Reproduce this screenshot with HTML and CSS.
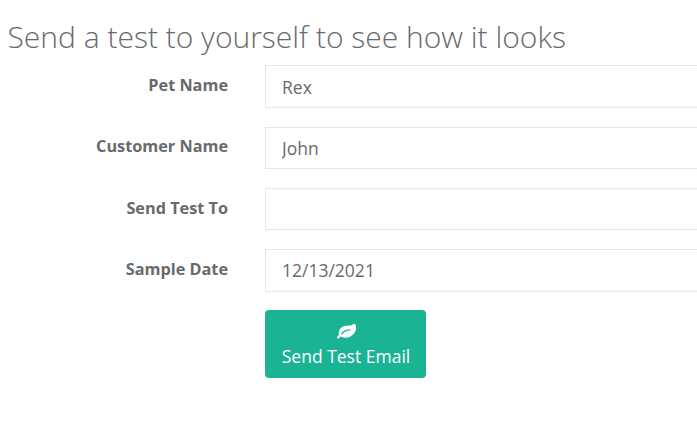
FILE: index.html
```html
<!DOCTYPE html>
<html lang="en">
<head>
  <meta charset="UTF-8">
  <meta name="viewport" content="width=device-width, initial-scale=1.0">
  <title>Send Test Email</title>
  <link rel="stylesheet" href="styles.css">
</head>
<body>
  <h2>Send a test to yourself to see how it looks</h2>

  <form id="testForm">
    <div class="form-group">
      <label for="petName">Pet Name</label>
      <input type="text" id="petName" value="Rex">
    </div>

    <div class="form-group">
      <label for="customerName">Customer Name</label>
      <input type="text" id="customerName" value="John">
    </div>

    <div class="form-group">
      <label for="sendTo">Send Test To</label>
      <input type="text" id="sendTo">
    </div>

    <div class="form-group">
      <label for="sampleDate">Sample Date</label>
      <input type="text" id="sampleDate" value="12/13/2021">
    </div>

    <div class="form-actions">
      <button type="button">
        <svg class="icon" viewBox="0 0 1792 1792" fill="currentColor" aria-hidden="true">
          <path d="M1280 832q0-26-19-45t-45-19q-172 0-318 49.5t-259.5 134-235.5 219.5q-19 21-19 45 0 26 19 45t45 19q24 0 45-19 27-24 74-71t67-66q137-124 268.5-176t313.5-52q26 0 45-19t19-45zm512-198q0 95-20 193-46 224-184.5 383t-357.5 268q-214 108-438 108-148 0-286-47-15-5-88-42t-96-37q-16 0-39.5 32t-45 70-52.5 70-60 32q-43 0-63.5-17.5t-45.5-59.5q-2-4-6-11t-5.5-10-3-9.5-1.5-13.5q0-35 31-73.5t68-65.5 68-56 31-48q0-4-14-38t-16-44q-9-51-9-104 0-115 43.5-220t119-184.5 170.5-139 204-95.5q55-18 145-25.5t179.5-9 178.5-6 163.5-24 113.5-56.5l29.5-29.5 29.5-28 27-20 36.5-16 43.5-4.5q39 0 70.5 46t47.5 112 24 124 8 96z"/>
        </svg>
        <span>Send Test Email</span>
      </button>
    </div>
  </form>
</body>
</html>
```
FILE: styles.css
```css
:root {
  --primary: #1ab394;
  --text: #676a6c;
  --border: #e5e6e7;
}

* {
  box-sizing: border-box;
  margin: 0;
  padding: 0;
}

body {
  font-family: "Open Sans", Helvetica, Arial, sans-serif;
  background-color: #fff;
  color: var(--text);
  padding: 20px 0 0 7.5px;
}

h2 {
  font-size: 30px;
  font-weight: 300;
  line-height: 33px;
  margin-bottom: 12.4px;
  white-space: nowrap;
}

.form-group {
  display: flex;
  align-items: flex-start;
  margin-bottom: 18.75px;
}

label {
  flex: none;
  width: 220.5px;
  margin-right: 37px;
  padding-top: 8.8px;
  text-align: right;
  font-size: 16.25px;
  font-weight: 700;
  line-height: 23px;
}

input {
  flex: 1;
  min-width: 0;
  height: 42.5px;
  padding: 7.5px 15px 7.5px 16px;
  border: 1px solid var(--border);
  border-right: none;
  border-radius: 1px 0 0 1px;
  background-color: #fff;
  color: inherit;
  font-family: inherit;
  font-size: 17.5px;
}

input:focus {
  outline: none;
  border-color: var(--primary);
}

.form-actions {
  padding-left: 257.5px;
}

button {
  display: flex;
  flex-direction: column;
  align-items: center;
  width: 161px;
  height: 67.5px;
  padding: 10.2px 0 0 1px;
  border: none;
  border-radius: 4px;
  background-color: var(--primary);
  color: #fff;
  font-family: inherit;
  font-size: 17.5px;
  line-height: 25px;
  white-space: nowrap;
  cursor: pointer;
}

button:hover {
  background-color: #18a689;
}

.icon {
  width: 19px;
  height: 19px;
  margin-bottom: 4.4px;
}
```
